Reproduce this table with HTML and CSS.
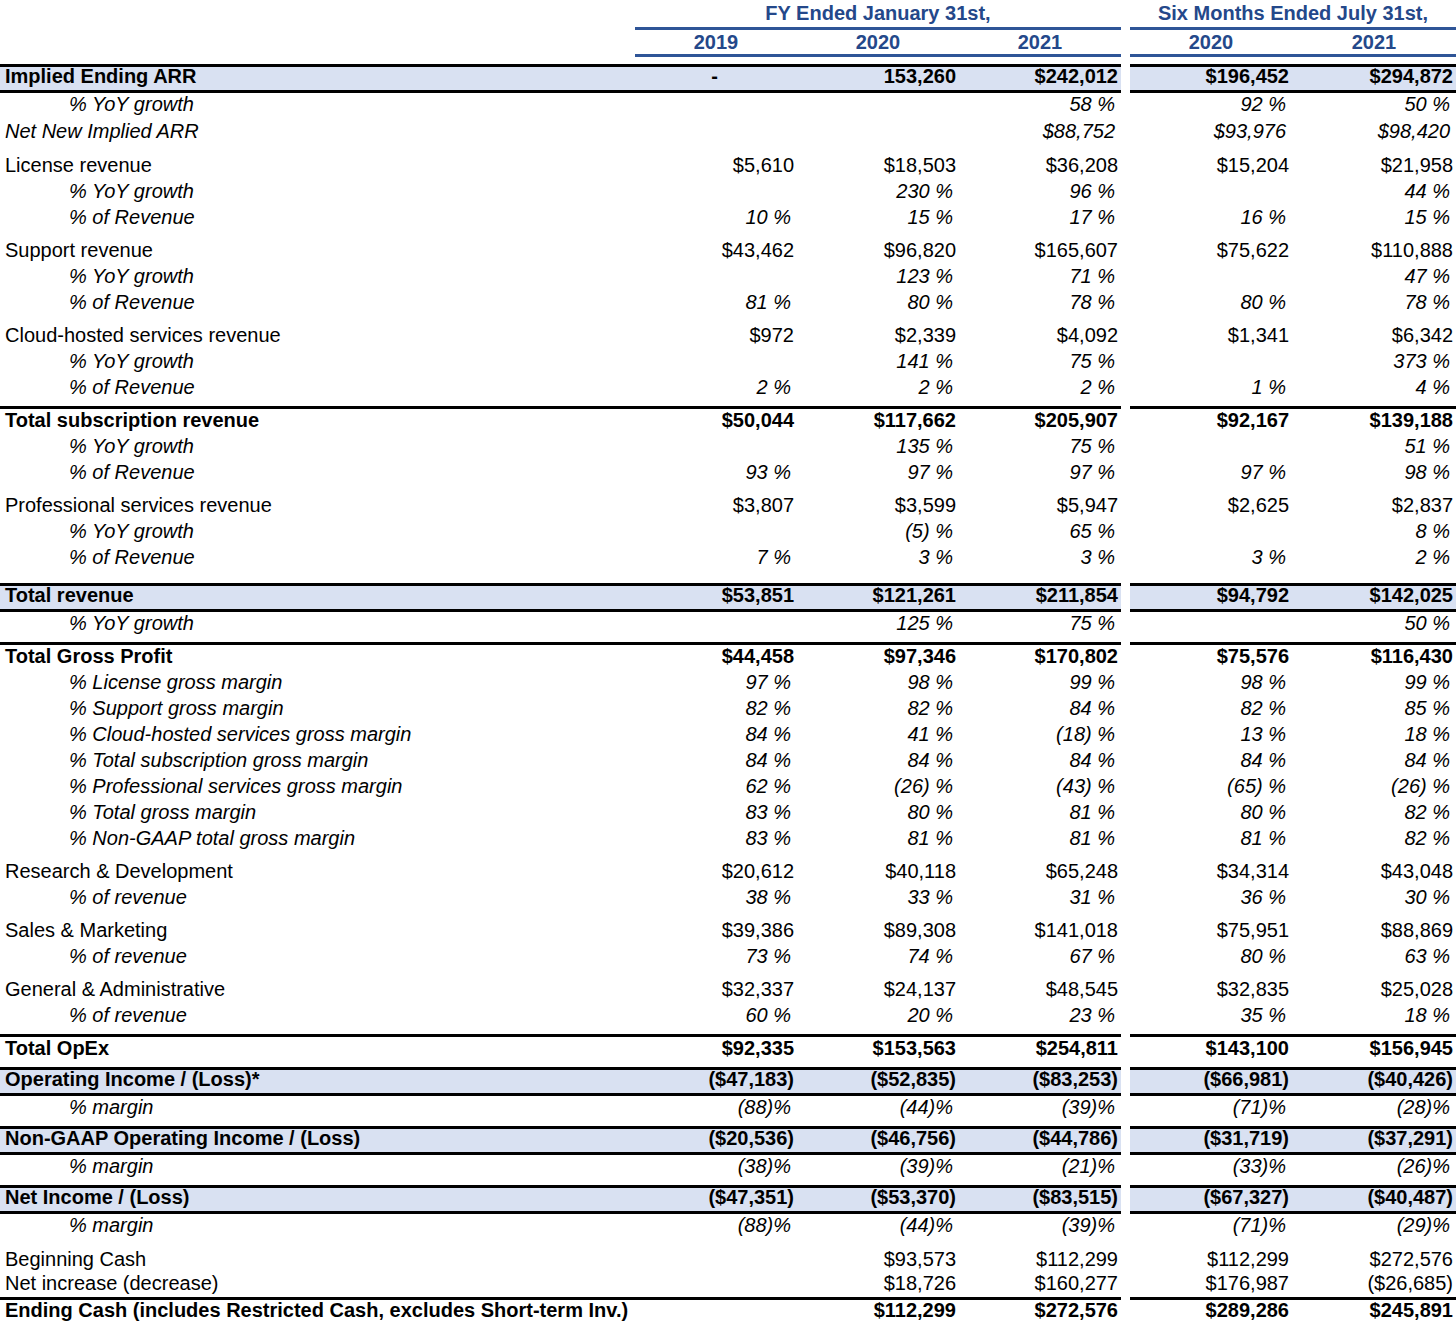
FILE: index.html
```html
<!DOCTYPE html>
<html lang="en">
<head>
    <meta charset="UTF-8">
    <title>Financial Summary</title>
    <link rel="stylesheet" href="styles.css">
</head>
<body>

    <table class="fin">
        <colgroup>
            <col class="c-label">
            <col class="c-val"><col class="c-val"><col class="c-val">
            <col class="c-gap">
            <col class="c-val"><col class="c-val-last">
        </colgroup>

        <!-- Period headers -->
        <tr class="head1">
            <td></td>
            <td colspan="3" class="grp">FY Ended January 31st,</td>
            <td class="g"></td>
            <td colspan="2" class="grp">Six Months Ended July 31st,</td>
        </tr>
        <tr class="head2">
            <td></td>
            <td class="yr">2019</td><td class="yr">2020</td><td class="yr">2021</td>
            <td class="g"></td>
            <td class="yr">2020</td><td class="yr">2021</td>
        </tr>
        <tr class="spacer"><td colspan="7"></td></tr>

        <!-- ARR -->
        <tr class="hl">
            <td>Implied Ending ARR</td>
            <td class="dash">-</td><td>153,260</td><td>$242,012</td>
            <td class="g"></td>
            <td>$196,452</td><td>$294,872</td>
        </tr>
        <tr class="sub">
            <td>% YoY growth</td>
            <td></td><td></td><td>58 %</td>
            <td class="g"></td>
            <td>92 %</td><td>50 %</td>
        </tr>
        <tr class="it tall">
            <td>Net New Implied ARR</td>
            <td></td><td></td><td>$88,752</td>
            <td class="g"></td>
            <td>$93,976</td><td>$98,420</td>
        </tr>

        <!-- License -->
        <tr class="sp">
            <td>License revenue</td>
            <td>$5,610</td><td>$18,503</td><td>$36,208</td>
            <td class="g"></td>
            <td>$15,204</td><td>$21,958</td>
        </tr>
        <tr class="sub">
            <td>% YoY growth</td>
            <td></td><td>230 %</td><td>96 %</td>
            <td class="g"></td>
            <td></td><td>44 %</td>
        </tr>
        <tr class="sub">
            <td>% of Revenue</td>
            <td>10 %</td><td>15 %</td><td>17 %</td>
            <td class="g"></td>
            <td>16 %</td><td>15 %</td>
        </tr>

        <!-- Support -->
        <tr class="sp">
            <td>Support revenue</td>
            <td>$43,462</td><td>$96,820</td><td>$165,607</td>
            <td class="g"></td>
            <td>$75,622</td><td>$110,888</td>
        </tr>
        <tr class="sub">
            <td>% YoY growth</td>
            <td></td><td>123 %</td><td>71 %</td>
            <td class="g"></td>
            <td></td><td>47 %</td>
        </tr>
        <tr class="sub">
            <td>% of Revenue</td>
            <td>81 %</td><td>80 %</td><td>78 %</td>
            <td class="g"></td>
            <td>80 %</td><td>78 %</td>
        </tr>

        <!-- Cloud -->
        <tr class="sp">
            <td>Cloud-hosted services revenue</td>
            <td>$972</td><td>$2,339</td><td>$4,092</td>
            <td class="g"></td>
            <td>$1,341</td><td>$6,342</td>
        </tr>
        <tr class="sub">
            <td>% YoY growth</td>
            <td></td><td>141 %</td><td>75 %</td>
            <td class="g"></td>
            <td></td><td>373 %</td>
        </tr>
        <tr class="sub pb">
            <td>% of Revenue</td>
            <td>2 %</td><td>2 %</td><td>2 %</td>
            <td class="g"></td>
            <td>1 %</td><td>4 %</td>
        </tr>

        <!-- Total subscription -->
        <tr class="tot">
            <td>Total subscription revenue</td>
            <td>$50,044</td><td>$117,662</td><td>$205,907</td>
            <td class="g"></td>
            <td>$92,167</td><td>$139,188</td>
        </tr>
        <tr class="sub">
            <td>% YoY growth</td>
            <td></td><td>135 %</td><td>75 %</td>
            <td class="g"></td>
            <td></td><td>51 %</td>
        </tr>
        <tr class="sub">
            <td>% of Revenue</td>
            <td>93 %</td><td>97 %</td><td>97 %</td>
            <td class="g"></td>
            <td>97 %</td><td>98 %</td>
        </tr>

        <!-- Professional services -->
        <tr class="sp">
            <td>Professional services revenue</td>
            <td>$3,807</td><td>$3,599</td><td>$5,947</td>
            <td class="g"></td>
            <td>$2,625</td><td>$2,837</td>
        </tr>
        <tr class="sub">
            <td>% YoY growth</td>
            <td></td><td>(5) %</td><td>65 %</td>
            <td class="g"></td>
            <td></td><td>8 %</td>
        </tr>
        <tr class="sub pbl">
            <td>% of Revenue</td>
            <td>7 %</td><td>3 %</td><td>3 %</td>
            <td class="g"></td>
            <td>3 %</td><td>2 %</td>
        </tr>

        <!-- Total revenue -->
        <tr class="hl">
            <td>Total revenue</td>
            <td>$53,851</td><td>$121,261</td><td>$211,854</td>
            <td class="g"></td>
            <td>$94,792</td><td>$142,025</td>
        </tr>
        <tr class="sub pb">
            <td>% YoY growth</td>
            <td></td><td>125 %</td><td>75 %</td>
            <td class="g"></td>
            <td></td><td>50 %</td>
        </tr>

        <!-- Gross profit -->
        <tr class="tot">
            <td>Total Gross Profit</td>
            <td>$44,458</td><td>$97,346</td><td>$170,802</td>
            <td class="g"></td>
            <td>$75,576</td><td>$116,430</td>
        </tr>
        <tr class="sub">
            <td>% License gross margin</td>
            <td>97 %</td><td>98 %</td><td>99 %</td>
            <td class="g"></td>
            <td>98 %</td><td>99 %</td>
        </tr>
        <tr class="sub">
            <td>% Support gross margin</td>
            <td>82 %</td><td>82 %</td><td>84 %</td>
            <td class="g"></td>
            <td>82 %</td><td>85 %</td>
        </tr>
        <tr class="sub">
            <td>% Cloud-hosted services gross margin</td>
            <td>84 %</td><td>41 %</td><td>(18) %</td>
            <td class="g"></td>
            <td>13 %</td><td>18 %</td>
        </tr>
        <tr class="sub">
            <td>% Total subscription gross margin</td>
            <td>84 %</td><td>84 %</td><td>84 %</td>
            <td class="g"></td>
            <td>84 %</td><td>84 %</td>
        </tr>
        <tr class="sub">
            <td>% Professional services gross margin</td>
            <td>62 %</td><td>(26) %</td><td>(43) %</td>
            <td class="g"></td>
            <td>(65) %</td><td>(26) %</td>
        </tr>
        <tr class="sub">
            <td>% Total gross margin</td>
            <td>83 %</td><td>80 %</td><td>81 %</td>
            <td class="g"></td>
            <td>80 %</td><td>82 %</td>
        </tr>
        <tr class="sub">
            <td>% Non-GAAP total gross margin</td>
            <td>83 %</td><td>81 %</td><td>81 %</td>
            <td class="g"></td>
            <td>81 %</td><td>82 %</td>
        </tr>

        <!-- Operating expenses -->
        <tr class="sp">
            <td>Research &amp; Development</td>
            <td>$20,612</td><td>$40,118</td><td>$65,248</td>
            <td class="g"></td>
            <td>$34,314</td><td>$43,048</td>
        </tr>
        <tr class="sub">
            <td>% of revenue</td>
            <td>38 %</td><td>33 %</td><td>31 %</td>
            <td class="g"></td>
            <td>36 %</td><td>30 %</td>
        </tr>
        <tr class="sp">
            <td>Sales &amp; Marketing</td>
            <td>$39,386</td><td>$89,308</td><td>$141,018</td>
            <td class="g"></td>
            <td>$75,951</td><td>$88,869</td>
        </tr>
        <tr class="sub">
            <td>% of revenue</td>
            <td>73 %</td><td>74 %</td><td>67 %</td>
            <td class="g"></td>
            <td>80 %</td><td>63 %</td>
        </tr>
        <tr class="sp">
            <td>General &amp; Administrative</td>
            <td>$32,337</td><td>$24,137</td><td>$48,545</td>
            <td class="g"></td>
            <td>$32,835</td><td>$25,028</td>
        </tr>
        <tr class="sub pb">
            <td>% of revenue</td>
            <td>60 %</td><td>20 %</td><td>23 %</td>
            <td class="g"></td>
            <td>35 %</td><td>18 %</td>
        </tr>

        <tr class="tot pb">
            <td>Total OpEx</td>
            <td>$92,335</td><td>$153,563</td><td>$254,811</td>
            <td class="g"></td>
            <td>$143,100</td><td>$156,945</td>
        </tr>

        <!-- Income -->
        <tr class="hl">
            <td>Operating Income / (Loss)*</td>
            <td>($47,183)</td><td>($52,835)</td><td>($83,253)</td>
            <td class="g"></td>
            <td>($66,981)</td><td>($40,426)</td>
        </tr>
        <tr class="sub pb">
            <td>% margin</td>
            <td>(88)%</td><td>(44)%</td><td>(39)%</td>
            <td class="g"></td>
            <td>(71)%</td><td>(28)%</td>
        </tr>
        <tr class="hl">
            <td>Non-GAAP Operating Income / (Loss)</td>
            <td>($20,536)</td><td>($46,756)</td><td>($44,786)</td>
            <td class="g"></td>
            <td>($31,719)</td><td>($37,291)</td>
        </tr>
        <tr class="sub pb">
            <td>% margin</td>
            <td>(38)%</td><td>(39)%</td><td>(21)%</td>
            <td class="g"></td>
            <td>(33)%</td><td>(26)%</td>
        </tr>
        <tr class="hl">
            <td>Net Income / (Loss)</td>
            <td>($47,351)</td><td>($53,370)</td><td>($83,515)</td>
            <td class="g"></td>
            <td>($67,327)</td><td>($40,487)</td>
        </tr>
        <tr class="sub">
            <td>% margin</td>
            <td>(88)%</td><td>(44)%</td><td>(39)%</td>
            <td class="g"></td>
            <td>(71)%</td><td>(29)%</td>
        </tr>

        <!-- Cash -->
        <tr class="sp cash">
            <td>Beginning Cash</td>
            <td></td><td>$93,573</td><td>$112,299</td>
            <td class="g"></td>
            <td>$112,299</td><td>$272,576</td>
        </tr>
        <tr class="cash">
            <td>Net increase (decrease)</td>
            <td></td><td>$18,726</td><td>$160,277</td>
            <td class="g"></td>
            <td>$176,987</td><td>($26,685)</td>
        </tr>
        <tr class="tot cash">
            <td>Ending Cash (includes Restricted Cash, excludes Short-term Inv.)</td>
            <td></td><td>$112,299</td><td>$272,576</td>
            <td class="g"></td>
            <td>$289,286</td><td>$245,891</td>
        </tr>
    </table>

</body>
</html>
```

FILE: styles.css
```css
/* Styles généraux */
body {
    margin: 0;
    padding: 0;
    background-color: #fff;
    color: #000;
    font-family: "Liberation Sans", Arial, sans-serif;
}

.fin {
    width: 1456px;
    table-layout: fixed;
    border-collapse: separate;
    border-spacing: 0;
}

.c-label { width: 635px; }
.c-val { width: 162px; }
.c-val-last { width: 164px; }
.c-gap { width: 9px; }

/* cellules : chiffres par défaut */
.fin td {
    padding: 0 3px 4px 0;
    line-height: 22px;
    text-align: right;
    white-space: nowrap;
    font-size: 20px;
    vertical-align: top;
}

/* libellés */
.fin td:first-child {
    text-align: left;
    padding-left: 5px;
    padding-right: 0;
}

.fin td.g {
    padding-right: 0;
}

/* En-tête */
.head1 td {
    line-height: 27px;
    padding-bottom: 0;
}
.head2 td {
    line-height: 24px;
    padding-bottom: 0;
}
.grp, .yr {
    color: #24488a;
    font-weight: bold;
}
.fin .grp,
.fin .yr {
    text-align: center;
    padding: 0;
    border-bottom: 3px solid #2f5597;
}
.spacer td {
    height: 7px;
    line-height: 0;
    padding: 0;
}

/* lignes surlignées */
.hl td {
    background: #d9e1f2;
    font-weight: bold;
    line-height: 19px;
    border-top: 3px solid #000;
    border-bottom: 3px solid #000;
}
.hl td.g {
    background: none;
    border-color: transparent;
}
.fin .dash {
    text-align: center;
}

/* totaux */
.tot td {
    font-weight: bold;
    border-top: 3px solid #000;
}
.tot td.g {
    border-color: transparent;
}

/* sous-lignes */
.sub td, .it td {
    font-style: italic;
    padding-right: 6px;
}
.fin .sub td:first-child {
    padding-left: 69px;
}
.tall td {
    line-height: 24px;
}

.sp td {
    padding-top: 7px;
}
.pb td {
    padding-bottom: 8px;
}
.pbl td {
    padding-bottom: 15px;
}
.cash td {
    line-height: 20px;
}
.sp.cash td {
    padding-top: 9px;
}
```
